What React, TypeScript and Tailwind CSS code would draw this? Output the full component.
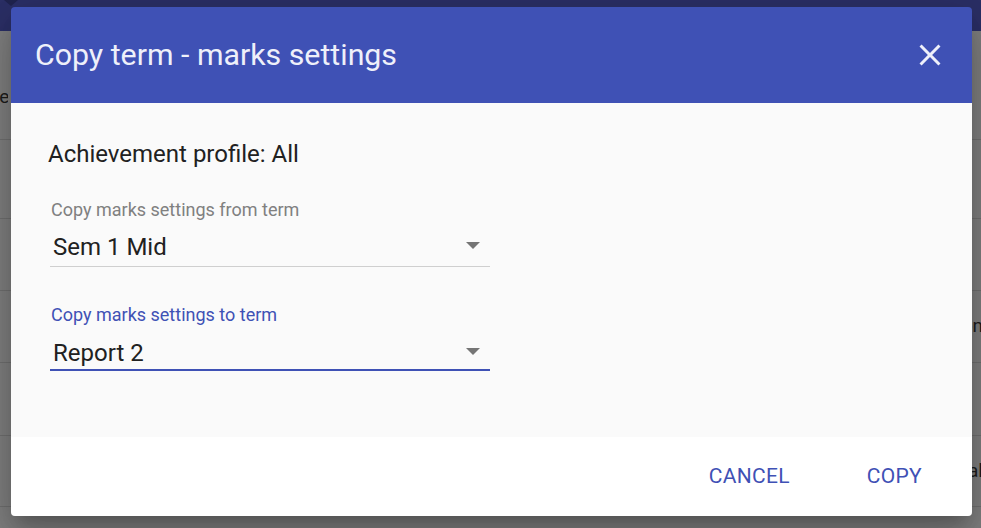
import { ReactNode } from 'react';

const CloseIcon = () => (
  <svg width="36" height="36" viewBox="0 0 24 24" fill="currentColor">
    <path d="M19 6.41L17.59 5 12 10.59 6.41 5 5 6.41 10.59 12 5 17.59 6.41 19 12 13.41 17.59 19 19 17.59 13.41 12z" />
  </svg>
);

const ArrowDrop = () => (
  <svg width="14" height="7" viewBox="0 0 14 7" fill="#757575">
    <path d="M0 0h14L7 7z" />
  </svg>
);

const BgRow = ({ h, left, right, extra }: { h: string; left?: string; right?: string; extra?: string }) => (
  <div className={`${h} ${extra ?? ''} flex items-center justify-between border-b border-[#707070]`}>
    <span className="-ml-[52px] w-[60px] overflow-hidden whitespace-nowrap text-right text-[19px] text-[#1c1c1c]">
      {left ?? ''}
    </span>
    <span className="-mr-[2px] whitespace-nowrap text-right text-[19px] text-[#1c1c1c]">{right ?? ''}</span>
  </div>
);

const SelectField = ({
  label,
  value,
  focused,
  children,
}: {
  label: string;
  value: string;
  focused?: boolean;
  children?: ReactNode;
}) => (
  <div className="ml-[2px] w-[440px]">
    <div
      className={`h-[24px] pl-[1px] text-[18px] leading-[24px] ${focused ? 'text-[#3f51b5]' : 'text-[#808080]'}`}
    >
      {label}
    </div>
    <div
      className={`flex items-start justify-between pl-[3px] pr-[10px] ${
        focused ? 'mt-[12px] border-b-2 border-[#3f51b5] pb-[2px]' : 'mt-[11px] border-b border-[#cfcfcf] pb-[5px]'
      }`}
    >
      <span className="h-[28px] text-[24px] leading-[28px] text-[#212121]">{value}</span>
      <span className="mt-[9px]">
        <ArrowDrop />
      </span>
    </div>
    {children}
  </div>
);

export default function App() {
  return (
    <div
      className="relative h-[528px] w-[981px] overflow-hidden bg-[#808080]"
      style={{ fontFamily: 'Roboto, "Noto Sans", sans-serif' }}
    >
      {/* page behind the dialog */}
      <div className="relative h-[31px] bg-[#2b2f66]">
        <div className="absolute left-[4px] top-0 h-0 w-0 border-x-[7px] border-t-[6px] border-x-transparent border-t-[#20244f]" />
      </div>
      <BgRow h="h-[109px]" extra="pt-[24px]" left="Teacher" />
      <BgRow h="h-[79px]" />
      <BgRow h="h-[72px]" />
      <BgRow h="h-[72px]" right="Common" />
      <BgRow h="h-[73px]" />
      <BgRow h="h-[71px]" right="Total" />

      {/* dialog */}
      <div className="absolute left-[11px] top-[7px] flex h-[509px] w-[961px] flex-col overflow-hidden rounded-[4px] shadow-[0_11px_15px_-7px_rgba(0,0,0,0.2),0_24px_38px_3px_rgba(0,0,0,0.14),0_9px_46px_8px_rgba(0,0,0,0.12)]">
        <div className="flex h-[96px] shrink-0 items-center justify-between bg-[#3f51b5] pl-[24px] pr-[24px]">
          <h2 className="text-[30.3px] font-normal leading-[36px] text-[#eef0fa]">Copy term - marks settings</h2>
          <button className="text-[#eef0fa]">
            <CloseIcon />
          </button>
        </div>

        <div className="flex flex-1 flex-col bg-[#fafafa] pl-[37px] pt-[37px]">
          <div className="h-[28px] text-[24px] leading-[28px] text-[#212121]">Achievement profile: All</div>
          <div className="mt-[30px]">
            <SelectField label="Copy marks settings from term" value="Sem 1 Mid" />
          </div>
          <div className="mt-[36px]">
            <SelectField label="Copy marks settings to term" value="Report 2" focused />
          </div>
        </div>

        <div className="flex h-[79px] shrink-0 items-center justify-end gap-[37px] bg-white pr-[30px]">
          <button className="px-[20px] text-[21px] tracking-[0.3px] text-[#3f51b5]">CANCEL</button>
          <button className="px-[20px] text-[21px] tracking-[0.3px] text-[#3f51b5]">COPY</button>
        </div>
      </div>
    </div>
  );
}
